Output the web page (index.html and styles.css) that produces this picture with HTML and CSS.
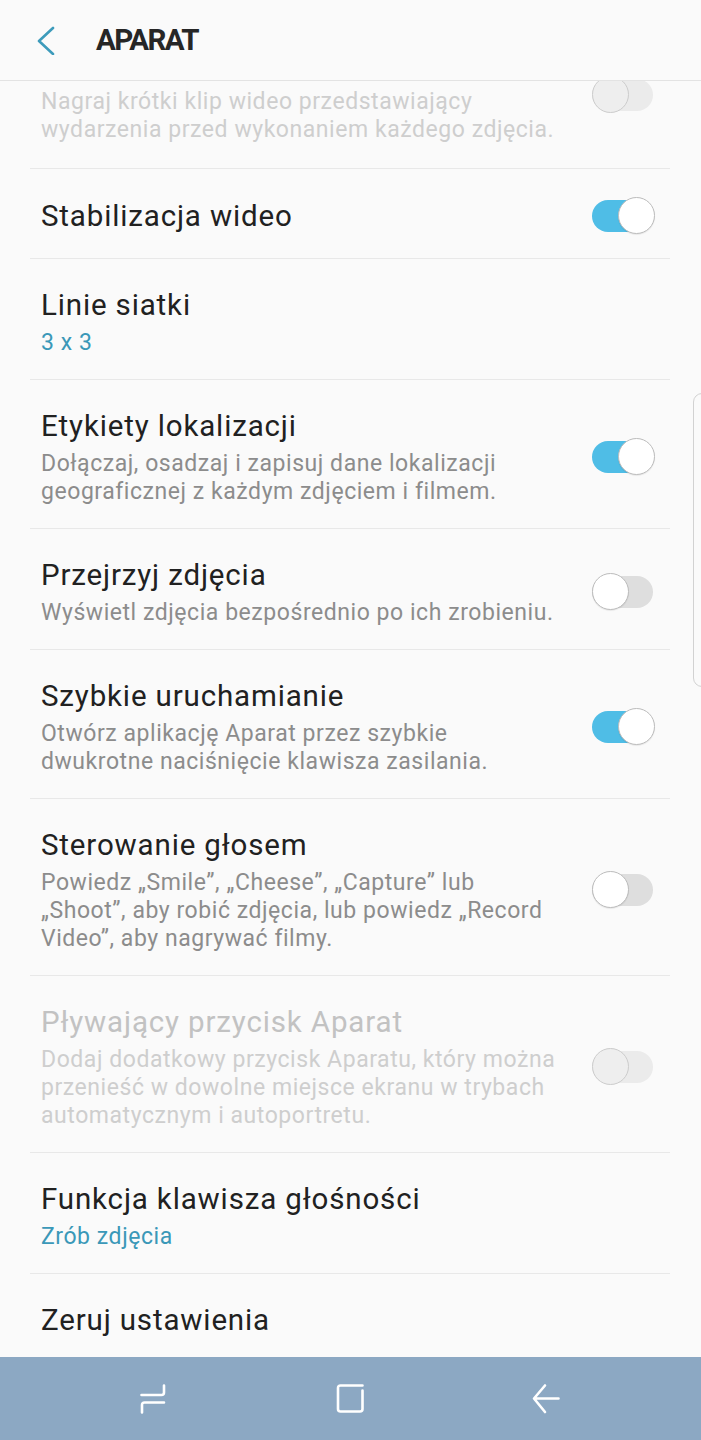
FILE: index.html
```html
<!DOCTYPE html>
<html lang="pl">
<head>
<meta charset="utf-8">
<title>Aparat</title>
<link rel="stylesheet" href="styles.css">
</head>
<body>
<div class="screen">
  <header class="appbar">
    <svg class="back" viewBox="0 0 24 30" width="24" height="30"><path d="M17 3 L3 16 L17 29" /></svg>
    <h1 class="apptitle">APARAT</h1>
  </header>
  <div class="scroll" id="list">
    <ul class="list">
      <li class="row disabled first">
        <div class="text">
          <div class="title">Zdjęcie w ruchu</div>
          <div class="sub">Nagraj krótki klip wideo przedstawiający<br>wydarzenia przed wykonaniem każdego zdjęcia.</div>
        </div>
        <span class="switch off dis"><span class="track"></span><span class="knob"></span></span>
      </li>
      <li class="row single">
        <div class="text"><div class="title">Stabilizacja wideo</div></div>
        <span class="switch on"><span class="track"></span><span class="knob"></span></span>
      </li>
      <li class="row">
        <div class="text">
          <div class="title">Linie siatki</div>
          <div class="sub value">3 x 3</div>
        </div>
      </li>
      <li class="row">
        <div class="text">
          <div class="title">Etykiety lokalizacji</div>
          <div class="sub">Dołączaj, osadzaj i zapisuj dane lokalizacji<br>geograficznej z każdym zdjęciem i filmem.</div>
        </div>
        <span class="switch on"><span class="track"></span><span class="knob"></span></span>
      </li>
      <li class="row">
        <div class="text">
          <div class="title">Przejrzyj zdjęcia</div>
          <div class="sub">Wyświetl zdjęcia bezpośrednio po ich zrobieniu.</div>
        </div>
        <span class="switch off"><span class="track"></span><span class="knob"></span></span>
      </li>
      <li class="row">
        <div class="text">
          <div class="title">Szybkie uruchamianie</div>
          <div class="sub">Otwórz aplikację Aparat przez szybkie<br>dwukrotne naciśnięcie klawisza zasilania.</div>
        </div>
        <span class="switch on"><span class="track"></span><span class="knob"></span></span>
      </li>
      <li class="row">
        <div class="text">
          <div class="title">Sterowanie głosem</div>
          <div class="sub">Powiedz „Smile”, „Cheese”, „Capture” lub<br>„Shoot”, aby robić zdjęcia, lub powiedz „Record<br>Video”, aby nagrywać filmy.</div>
        </div>
        <span class="switch off"><span class="track"></span><span class="knob"></span></span>
      </li>
      <li class="row disabled">
        <div class="text">
          <div class="title">Pływający przycisk Aparat</div>
          <div class="sub">Dodaj dodatkowy przycisk Aparatu, który można<br>przenieść w dowolne miejsce ekranu w trybach<br>automatycznym i autoportretu.</div>
        </div>
        <span class="switch off dis"><span class="track"></span><span class="knob"></span></span>
      </li>
      <li class="row">
        <div class="text">
          <div class="title">Funkcja klawisza głośności</div>
          <div class="sub value">Zrób zdjęcia</div>
        </div>
      </li>
      <li class="row single last">
        <div class="text"><div class="title">Zeruj ustawienia</div></div>
      </li>
    </ul>
  </div>
  <nav class="navbar">
    <svg class="navicon" viewBox="0 0 30 30" width="30" height="30"><path d="M24 1.5 V8.5 Q24 11 21.5 11 H1.5 M24 18.5 H4.5 Q2 18.5 2 21 V28.5" /></svg>
    <svg class="navicon" viewBox="0 0 30 30" width="30" height="30"><path d="M26.5 1.5 H4.5 Q2 1.5 2 4 V25 Q2 27.5 4.5 27.5 H24 Q26.5 27.5 26.5 25 V6.5" /></svg>
    <svg class="navicon" viewBox="0 0 30 30" width="30" height="30"><path d="M13 1.5 L2 14.5 L13 28 M3 14.5 H26.5" /></svg>
  </nav>
  <div class="scrollbar"></div>
</div>
<script>document.getElementById('list').scrollTop = 63;</script>
</body>
</html>
```

FILE: styles.css
```css
html, body {
  margin: 0;
  padding: 0;
  background: #fafafa;
}
body {
  font-family: Roboto, "Noto Sans", "Liberation Sans", sans-serif;
}
.screen {
  position: relative;
  width: 701px;
  height: 1440px;
  display: flex;
  flex-direction: column;
  overflow: hidden;
  background: #fafafa;
}
.appbar {
  flex: none;
  height: 80px;
  border-bottom: 1px solid #e3e3e3;
  display: flex;
  align-items: center;
  background: #fafafa;
}
.back {
  margin-left: 36px;
  fill: none;
  stroke: #3d9bbb;
  stroke-width: 2.6;
  stroke-linecap: round;
  stroke-linejoin: round;
}
.apptitle {
  margin: 0 0 0 36px;
  font-size: 29.5px;
  font-weight: 700;
  letter-spacing: -1.6px;
  color: #262626;
  line-height: 36px;
}
.scroll {
  flex: 1;
  overflow: hidden;
}
.list {
  list-style: none;
  margin: 0;
  padding: 0;
}
.row {
  display: flex;
  align-items: center;
  margin: 0 31px 0 30px;
  padding: 28px 14px 22px 11px;
  border-bottom: 1px solid #e8e8e8;
}
.row.first {
  padding-bottom: 24px;
}
.row.single {
  padding-bottom: 23px;
}
.row.last {
  border-bottom: none;
}
.text {
  flex: 1;
  min-width: 0;
}
.title {
  font-size: 29.5px;
  line-height: 36px;
  letter-spacing: 0.85px;
  color: #212121;
  white-space: nowrap;
}
.sub {
  margin-top: 6px;
  font-size: 23px;
  line-height: 28px;
  letter-spacing: 0.55px;
  color: #8c8c8c;
  white-space: nowrap;
}
.sub.value {
  color: #3b98b8;
}
.row.disabled .title {
  color: #c2c2c2;
}
.row.disabled .sub {
  color: #cecece;
}
.switch {
  position: relative;
  flex: none;
  width: 64px;
  height: 38px;
  margin-left: 20px;
}
.track {
  position: absolute;
  left: 0;
  top: 3px;
  width: 61px;
  height: 32px;
  border-radius: 16px;
  background: #dedede;
}
.knob {
  position: absolute;
  left: 0;
  top: 0;
  width: 35px;
  height: 35px;
  border: 1.5px solid #bcbcbc;
  border-radius: 50%;
  background: #ffffff;
  box-shadow: 0 1px 1px rgba(0, 0, 0, 0.08);
}
.switch.on .track {
  background: #4fbde6;
}
.switch.on .knob {
  left: 26px;
}
.switch.dis .track {
  background: #ebebeb;
}
.switch.dis .knob {
  background: #eeeeee;
  border-color: #cccccc;
  box-shadow: none;
}
.navbar {
  flex: none;
  height: 83px;
  background: #8ca8c3;
  display: grid;
  grid-template-columns: repeat(3, 196px);
  justify-content: center;
  align-items: center;
  justify-items: center;
}
.navicon {
  overflow: visible;
  fill: none;
  stroke: #ffffff;
  stroke-width: 2.6;
  stroke-linecap: round;
  stroke-linejoin: round;
}
.scrollbar {
  position: absolute;
  left: 693px;
  top: 393px;
  width: 20px;
  height: 292px;
  border: 1.5px solid #d2d2d2;
  border-radius: 9px;
}
```
